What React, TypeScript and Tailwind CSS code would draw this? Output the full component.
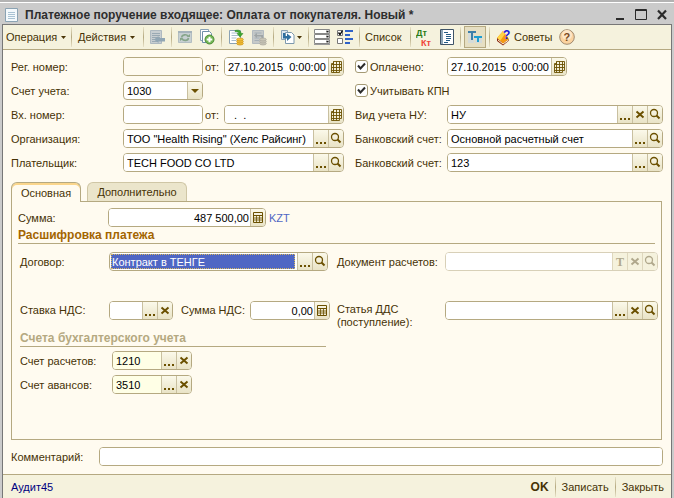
import React, { useId } from 'react';
import clsx from 'clsx';

type ButtonKind = 'dots' | 'clear' | 'search' | 'calendar' | 'calc' | 'type';

const buttonTitles: Record<ButtonKind, string> = {
  dots: 'Выбрать',
  clear: 'Очистить',
  search: 'Открыть',
  calendar: 'Календарь',
  calc: 'Калькулятор',
  type: 'Выбрать тип',
};

const Glyph: React.FC<{ kind: ButtonKind }> = ({ kind }) => (
  <svg width="14" height="17" viewBox="0 0 14 17" fill="none" stroke="currentColor" className="shrink-0">
    {kind === 'dots' && <path d="M2 13h2M6 13h2M10 13h2" strokeWidth="2" />}
    {kind === 'clear' && <path d="M3.500 5.500l7 6M10.500 5.500l-7 6" strokeWidth="2" />}
    {kind === 'search' && (
      <>
        <circle cx="6" cy="7" r="3.500" strokeWidth="1.300" />
        <path d="M8.500 9.500l3 3" strokeWidth="2" />
      </>
    )}
    {kind === 'calendar' && (
      <path d="M4.500 3.500h8v9h-2v2h-8v-9h2zM4.500 3.500v11M7.500 3.500v11M10.500 3.500v9M3 6.500h9.500M2.500 9.500h10M2.500 12.500h8" strokeWidth=".9" />
    )}
    {kind === 'calc' && (
      <>
        <path d="M2.500 3.500h9v10h-9zM3 6.500h8" />
        <path d="M3 9h8M3 11h8M5.500 7v6M8.500 7v6" strokeWidth=".8" />
      </>
    )}
    {kind === 'type' && (
      <text x="3" y="13" fontSize="12" fontWeight="bold" fontFamily="Liberation Serif, serif" fill="currentColor" stroke="none">
        T
      </text>
    )}
  </svg>
);

interface FieldProps {
  id?: string;
  label?: string;
  value?: string;
  buttons?: ButtonKind[];
  className?: string;
  inputClass?: string;
  disabled?: boolean;
}

const Field: React.FC<FieldProps> = ({ id, label, value = '', buttons = [], className, inputClass = 'bg-white text-black', disabled }) => (
  <div
    className={clsx(
      'flex h-[19px] overflow-hidden rounded border bg-white',
      disabled ? 'border-[#d8d0b8]' : 'border-[#b5a981]',
      className,
    )}
  >
    <input
      id={id}
      aria-label={label}
      defaultValue={value}
      disabled={disabled}
      className={clsx('min-w-0 flex-1 pr-px pl-[3px] outline-none', inputClass)}
    />
    {buttons.map((kind) => (
      <button
        key={kind}
        type="button"
        title={buttonTitles[kind]}
        disabled={disabled}
        className={clsx(
          'flex w-[15px] shrink-0 items-center justify-center border-l',
          disabled
            ? 'border-[#ded7bd] bg-[#f5f2dd] text-[#b0a88c]'
            : 'border-[#c9c0a0] bg-gradient-to-b from-[#fbf9ea] to-[#e9e3c6] text-[#6b5000]',
        )}
      >
        <Glyph kind={kind} />
      </button>
    ))}
  </div>
);

interface RowProps extends FieldProps {
  caption: React.ReactNode;
  captionClass: string;
}

// Caption and field side by side, tied together by a generated id
const Row: React.FC<RowProps> = ({ caption, captionClass, ...field }) => {
  const id = useId();
  return (
    <>
      <label htmlFor={id} className={clsx('shrink-0 whitespace-nowrap', captionClass)}>
        {caption}
      </label>
      <Field id={id} {...field} />
    </>
  );
};

const Check: React.FC<{ caption: string; className?: string }> = ({ caption, className }) => (
  <label className={clsx('flex shrink-0 items-center gap-0.5 whitespace-nowrap', className)}>
    <span className="grid size-[13px]">
      <input
        type="checkbox"
        defaultChecked
        className="peer col-start-1 row-start-1 size-[13px] appearance-none rounded-[3px] border border-[#a59a74] bg-white"
      />
      <svg className="pointer-events-none invisible col-start-1 row-start-1 peer-checked:visible" viewBox="0 0 13 13" fill="none" stroke="#2b2b2b" strokeWidth="2">
        <path d="M3 5.500l2.500 3L10 3.500" />
      </svg>
    </span>
    {caption}
  </label>
);

const Separator = () => <div className="h-5 w-px shrink-0 bg-gradient-to-b from-[#e8e2c8] via-[#b5a981] to-[#e8e2c8]" />;

const Arrow = () => (
  <svg width="5" height="3" viewBox="0 0 5 3" fill="#4a3508" className="shrink-0">
    <path d="M0 0h5L2.500 3z" />
  </svg>
);

const ToolButton: React.FC<{ title: string; className?: string; children: React.ReactNode }> = ({ title, className, children }) => (
  <button type="button" title={title} className={clsx('flex shrink-0 items-center', className)}>
    {children}
  </button>
);

const SheetIcon: React.FC<{ faded?: boolean }> = ({ faded }) => (
  <svg width="16" height="17" viewBox="0 0 16 17" fill="none">
    <path d="M1.500 1.500h11v13h-11z" fill={faded ? '#c5c9c8' : '#fff'} stroke={faded ? '#b3bbc0' : '#8aa2b5'} />
    <path d="M3.500 4h7M3.500 6.500h7M3.500 9h5M3.500 11.500h5" stroke={faded ? '#a4afb7' : '#a9bdcd'} />
    {faded ? (
      <path d="M12 12V6H6V4L3 6.500 6 9V7.500h4" fill="#9fa5a6" />
    ) : (
      <path d="M7 1.500c4-1 6 0 6 3h2L12 8 9 4.500h2c0-1-1-2-4-2z" fill="#3da82b" stroke="#27851b" strokeWidth=".5" />
    )}
    <g fill={faded ? '#c9c6b8' : '#f5c23c'} stroke={faded ? '#aaa79b' : '#c98f13'} strokeWidth=".7">
      <ellipse cx="12" cy="14.500" rx="3.300" ry="1.500" />
      <ellipse cx="12" cy="12.500" rx="3.300" ry="1.500" />
      <ellipse cx="12" cy="10.500" rx="3.300" ry="1.500" />
    </g>
  </svg>
);

const Toolbar = () => (
  <div className="flex h-[25px] shrink-0 items-center border-b border-[#b5a981] bg-[#f5f2dd] pl-[3px]">
    <ToolButton title="Операция" className="w-[65px] gap-1">
      Операция <Arrow />
    </ToolButton>
    <Separator />
    <ToolButton title="Действия" className="w-[71px] gap-1 pl-1.5">
      Действия <Arrow />
    </ToolButton>
    <Separator />
    <ToolButton title="Найти в списке" className="w-[27px] pl-[5px]">
      <svg width="17" height="16" viewBox="0 0 17 16" fill="none">
        <path d="M1.500 1.500h11v13h-11z" fill="#c8ced1" stroke="#aeb9c0" />
        <path d="M3 4.500h8M3 6.500h8M3 8.500h8M3 10.500h6M3 12.500h6" stroke="#9aa9b3" />
        <path d="M5 10.500L9.500 7v2H16v3.500H9.500V14z" fill="#91a6b4" />
      </svg>
    </ToolButton>
    <Separator />
    <ToolButton title="Обновить" className="w-[27px] pl-1.5">
      <svg width="15" height="14" viewBox="0 0 15 14" fill="none">
        <path d="M.5 1.500h13v11H.5z" fill="#c7d0d2" stroke="#b3bec2" />
        <path d="M0 2h14" stroke="#a5b3bb" strokeWidth="2" />
        <path d="M3.500 7.500c.5-3 5-3.500 6.500-1.500M10.500 8c-.5 3-5 3-6.500 1" stroke="#86a58a" strokeWidth="1.600" />
        <path d="M8.500 7h3.500V4zM5.500 8H2v3z" fill="#86a58a" />
      </svg>
    </ToolButton>
    <ToolButton title="Скопировать" className="w-[22px]">
      <svg width="16" height="16" viewBox="0 0 16 16" fill="none">
        <path d="M1.500.5h8v11h-8z" fill="#fff" stroke="#8aa2b5" />
        <path d="M3.500 2.500h7l2 2v9h-9z" fill="#fff" stroke="#6f8fa8" />
        <circle cx="10.500" cy="10.500" r="4.500" fill="#72b553" stroke="#4a8c35" />
        <path d="M10.500 7.700v5.600M7.700 10.500h5.600" stroke="#fff" strokeWidth="2" />
      </svg>
    </ToolButton>
    <Separator />
    <ToolButton title="Провести" className="w-[29px] pl-1.5">
      <SheetIcon />
    </ToolButton>
    <ToolButton title="Отмена проведения" className="w-[22px]">
      <SheetIcon faded />
    </ToolButton>
    <Separator />
    <ToolButton title="Ввести на основании" className="w-[34px] gap-0.5 pl-1.5">
      <svg width="15" height="16" viewBox="0 0 15 16" fill="none">
        <path d="M1.500 1.500h6v9h-6z" fill="#dce6ee" stroke="#8aa2b5" />
        <path d="M5.500 3.500h6l2.500 2.500v8.500H5.500z" fill="#fff" stroke="#7d98ad" />
        <path d="M3 4v5.500h4V12l4.500-4L7 4.500V7H5V4z" fill="#2f6f9f" />
      </svg>
      <Arrow />
    </ToolButton>
    <Separator />
    <ToolButton title="Реквизиты" className="w-7 pl-[5px]">
      <svg width="17" height="16" viewBox="0 0 17 16" fill="none">
        <path d="M.5.5h15v4H.5zM.5 5.500h15v4H.5zM.5 10.500h15v4H.5z" fill="#fff" stroke="#888" />
        <path d="M12 1h3v3h-3zM12 6h3v3h-3zM12 11h3v3h-3z" fill="#c4c4c4" />
        <path d="M12 2h3l-1.500 1.500zM12 7h3l-1.500 1.500zM12 12h3l-1.500 1.500z" fill="#222" />
        <path d="M0 15.500h16" stroke="#999" />
      </svg>
    </ToolButton>
    <ToolButton title="Настройки" className="w-[22px]">
      <svg width="17" height="15" viewBox="0 0 17 15" fill="none">
        <path d="M.5.500h5v5h-5zM.5 8.500h5v5h-5z" fill="#fff" stroke="#777" />
        <path d="M1.500 2.500l1.500 2 2.500-4" stroke="#000" strokeWidth="1.300" />
        <path d="M8 1h8M8 5h5M8 9h8M8 13h5" stroke="#2f62c8" strokeWidth="2" />
      </svg>
    </ToolButton>
    <Separator />
    <ToolButton title="Список" className="w-[50px] pl-[5px]">
      Список
    </ToolButton>
    <Separator />
    <ToolButton title="Проводки" className="w-[29px] pl-[5px]">
      <svg width="17" height="19" viewBox="0 0 17 19" fontFamily="Liberation Sans, sans-serif" fontWeight="bold" fontSize="9">
        <text x="0" y="8" fill="#2b7d16">Дт</text>
        <text x="5" y="18" fill="#f04438">Кт</text>
      </svg>
    </ToolButton>
    <ToolButton title="Журнал" className="w-5">
      <svg width="15" height="17" viewBox="0 0 15 17" fill="none">
        <path d="M.5.5h13v15H.5z" fill="#fff" stroke="#3f5468" />
        <path d="M2 1v14" stroke="#8ea6b8" strokeWidth="2" />
        <path d="M4 3.500h4M6 5.500h5M6 7.500h5M6 9.500h5M6 11.500h4M4 13.500h4" stroke="#245b85" />
      </svg>
    </ToolButton>
    <Separator />
    <ToolButton title="Показать заголовки" className="mx-[3px] h-[22px] w-[22px] justify-center border border-[#b5a981] bg-[#e6dfc3]">
      <svg width="15" height="16" viewBox="0 0 15 16" fill="none">
        <path d="M0 2h6v12H0zM7 7h7v7H7z" fill="#d5dbd9" />
        <path d="M0 3h8M4 3v8" stroke="#3d7fa8" strokeWidth="2" />
        <path d="M6 8h8M10 8v5" stroke="#1d9dd0" strokeWidth="2" />
      </svg>
    </ToolButton>
    <Separator />
    <ToolButton title="Советы" className="w-[69px] gap-0.5 pl-1.5">
      <svg width="16" height="18" viewBox="0 0 16 18" fill="none">
        <path d="M1 10l6-7 6 8-6 5z" fill="#f59a12" />
        <path d="M1 10l6-7 2 3-5 7z" fill="#ffd447" />
        <path d="M1 10v3l6 4.500 6-5V11l-6 4.500z" fill="#8c2a12" />
        <path d="M2 12l5 4 5.500-4" stroke="#fff3d0" />
        <text x="7" y="11" fontFamily="Liberation Sans, sans-serif" fontWeight="bold" fontSize="12" fill="#1720d8">?</text>
      </svg>
      Советы
    </ToolButton>
    <ToolButton title="Справка">
      <svg width="16" height="16" viewBox="0 0 16 16">
        <circle cx="8" cy="8" r="7.300" fill="#fbd3a0" stroke="#a08a70" />
        <circle cx="8" cy="6" r="5" fill="#fde6c8" />
        <text x="4.500" y="12" fontFamily="Liberation Sans, sans-serif" fontWeight="bold" fontSize="11" fill="#7a4a1c">?</text>
      </svg>
    </ToolButton>
  </div>
);

const TitleBar = () => (
  <header className="flex h-6 shrink-0 items-center gap-[7px] border-t-2 border-[#b3b3b3] pr-1.5 pl-[5px] text-[#2e2e2e] shadow-[inset_0_1px_0_#fff]">
    <svg width="13" height="15" viewBox="0 0 13 15" fill="none" className="mt-1 shrink-0">
      <path d="M.5.5h12v13H.5z" fill="#f4f9fc" stroke="#8ba3b3" />
      <path d="M3 4.500h7M3 6.500h7M3 8.500h7M3 10.500h7" stroke="#a9c3d4" />
    </svg>
    <h1 className="mt-1 flex-1 truncate text-xs font-bold">
      Платежное поручение входящее: Оплата от покупателя. Новый *
    </h1>
    <div className="mt-1 flex gap-2.5">
      <button type="button" title="Свернуть">
        <svg width="9" height="12" viewBox="0 0 9 12"><path d="M0 9h8v2H0z" fill="#2b2b2b" /></svg>
      </button>
      <button type="button" title="Развернуть">
        <svg width="12" height="12" viewBox="0 0 12 12" fill="none" stroke="#2b2b2b"><path d="M.5 1.500h11M.5.5h11v10H.5z" /></svg>
      </button>
      <button type="button" title="Закрыть">
        <svg width="11" height="12" viewBox="0 0 11 12" fill="none" stroke="#2b2b2b" strokeWidth="2.200"><path d="M1 1.500l8 8.500M9 1.500L1 10" /></svg>
      </button>
    </div>
  </header>
);

const Header = () => {
  const accountId = useId();
  return (
    <div className="flex flex-col gap-[5px]">
      <div className="flex items-center">
        <Row caption="Рег. номер:" captionClass="w-28" className="w-20" inputClass="bg-[#fffbf0]" />
        <Row caption="от:" captionClass="w-[21px] pl-0.5" className="w-[120px]" value="27.10.2015  0:00:00" buttons={['calendar']} />
        <Check caption="Оплачено:" className="ml-[11px] w-[92px]" />
        <Field label="Дата оплаты" className="w-[120px]" value="27.10.2015  0:00:00" buttons={['calendar']} />
      </div>
      <div className="flex items-center">
        <label htmlFor={accountId} className="w-28 shrink-0">Счет учета:</label>
        <div className="grid h-[19px] w-20 overflow-hidden rounded border border-[#b5a981] bg-white">
          <select id={accountId} className="col-start-1 row-start-1 appearance-none px-[3px] text-black outline-none">
            <option>1030</option>
          </select>
          <span className="pointer-events-none col-start-1 row-start-1 flex w-[15px] items-center justify-center justify-self-end border-l border-[#c9c0a0] bg-gradient-to-b from-[#fbf9ea] to-[#e9e3c6]">
            <svg width="8" height="4" viewBox="0 0 8 4" fill="#6b5000"><path d="M0 0h8L4 4z" /></svg>
          </span>
        </div>
        <Check caption="Учитывать КПН" className="ml-[152px]" />
      </div>
      <div className="flex items-center">
        <Row caption="Вх. номер:" captionClass="w-28" className="w-20" />
        <Row caption="от:" captionClass="w-[21px] pl-0.5" className="w-[120px]" value="  .  ." buttons={['calendar']} />
        <Row caption="Вид учета НУ:" captionClass="ml-[11px] w-[92px]" className="flex-1" value="НУ" buttons={['dots', 'clear', 'search']} />
      </div>
      <div className="flex items-center">
        <Row caption="Организация:" captionClass="w-28" className="w-[221px]" value={'ТОО "Health Rising" (Хелс Райсинг)'} buttons={['dots', 'search']} />
        <Row caption="Банковский счет:" captionClass="ml-[11px] w-[92px]" className="flex-1" value="Основной расчетный счет" buttons={['dots', 'search']} />
      </div>
      <div className="flex items-center">
        <Row caption="Плательщик:" captionClass="w-28" className="w-[221px]" value="TECH FOOD CO LTD" buttons={['dots', 'search']} />
        <Row caption="Банковский счет:" captionClass="ml-[11px] w-[92px]" className="flex-1" value="123" buttons={['dots', 'search']} />
      </div>
    </div>
  );
};

const MainTab = () => (
  <section className="flex-1 border border-[#b5a981] pt-1.5 pr-[3px] pb-11 pl-1.5">
    <div className="flex items-center">
      <Row caption="Сумма:" captionClass="w-[90px]" className="w-[158px]" inputClass="bg-white text-right text-black" value="487 500,00" buttons={['calc']} />
      <a href="#currency" className="ml-[3px] text-[#4f66c4]">KZT</a>
    </div>
    <h2 className="mr-[3px] border-b border-[#b5a981] text-xs leading-4 font-bold text-[#a36500]">Расшифровка платежа</h2>

    <div className="mt-2 flex items-center pl-0.5">
      <Row
        caption="Договор:"
        captionClass="w-[89px]"
        className="w-[219px]"
        inputClass="m-px mr-0.5 border border-dotted border-[#d8b860] bg-[#4f66c4] !px-0 text-white"
        value="Контракт в ТЕНГЕ"
        buttons={['dots', 'search']}
      />
      <Row caption="Документ расчетов:" captionClass="ml-[9px] w-[108px]" className="flex-1" buttons={['type', 'clear', 'search']} disabled />
    </div>

    <div className="mt-[30px] flex items-start pl-0.5">
      <Row caption="Ставка НДС:" captionClass="w-[89px] leading-[19px]" className="w-16" buttons={['dots', 'clear']} />
      <Row caption="Сумма НДС:" captionClass="ml-2 w-[69px] leading-[19px]" className="w-20" inputClass="bg-white text-right text-black" value="0,00" buttons={['calc']} />
      <Row
        caption={<>Статья ДДС<br />(поступление):</>}
        captionClass="ml-[7px] w-[108px] pt-0.5 leading-[13px]"
        className="flex-1"
        buttons={['dots', 'clear', 'search']}
      />
    </div>

    <h2 className="mt-px ml-0.5 w-[306px] border-b border-[#b5a981] text-xs leading-4 font-bold text-[#b5a981]">
      Счета бухгалтерского учета
    </h2>
    <div className="mt-1 flex flex-col gap-[5px] pl-0.5">
      <div className="flex items-center">
        <Row caption="Счет расчетов:" captionClass="w-[92px]" className="w-20" inputClass="bg-[#ffffe6] text-black" value="1210" buttons={['dots', 'clear']} />
      </div>
      <div className="flex items-center">
        <Row caption="Счет авансов:" captionClass="w-[92px]" className="w-20" inputClass="bg-[#ffffe6] text-black" value="3510" buttons={['dots', 'clear']} />
      </div>
    </div>
  </section>
);

export default function App() {
  return (
    <div className="flex min-h-screen flex-col bg-[#cbcbcb] font-['Liberation_Sans',Arial,sans-serif] text-[11px] leading-[14px] text-[#463205]">
      <TitleBar />
      <main className="mr-0.5 ml-0.5 flex flex-1 flex-col border-x border-t border-[#777] bg-[#fffbf0]">
        <Toolbar />
        <div className="flex flex-1 flex-col px-2 pt-[7px] pb-2">
          <Header />
          <div className="mt-2.5 mr-px flex flex-1 flex-col">
            <div role="tablist" className="flex items-end gap-1.5">
              <button type="button" role="tab" aria-selected="true" className="z-10 -mb-px h-5 w-[70px] rounded-t-md border border-b-0 border-[#b5a981] bg-[#fffbf0] shadow-[inset_0_2px_0_#fbd68c]">
                Основная
              </button>
              <button type="button" role="tab" aria-selected="false" className="h-[19px] w-[100px] rounded-t-md border border-b-0 border-[#cfc6a5] bg-[#ebe5cb]">
                Дополнительно
              </button>
            </div>
            <MainTab />
          </div>
          <div className="mt-[7px] flex items-center">
            <Row caption="Комментарий:" captionClass="w-[88px]" className="flex-1" />
          </div>
        </div>
        <footer className="flex h-6 shrink-0 items-center border-t border-[#b5a981] bg-[#f5f2dd] pr-[7px] pl-2">
          <a href="#author" className="flex-1 text-[#000080]">Аудит45</a>
          <div className="flex items-center gap-1.5">
            <button type="button" className="text-xs font-bold">OK</button>
            <Separator />
            <button type="button">Записать</button>
            <Separator />
            <button type="button">Закрыть</button>
          </div>
        </footer>
      </main>
    </div>
  );
}
